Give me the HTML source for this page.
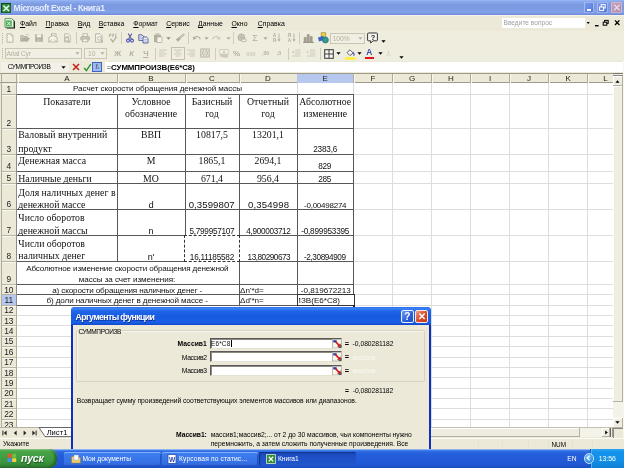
<!DOCTYPE html>
<html lang="ru"><head><meta charset="utf-8"><title>Microsoft Excel - Книга1</title>
<style>
html,body{margin:0;padding:0;}
body{width:624px;height:468px;position:relative;overflow:hidden;background:#ece9d8;font-family:"Liberation Sans","DejaVu Sans",sans-serif;will-change:transform;}
body div,body svg{position:absolute;}
.t{white-space:nowrap;}
.f{font-family:"Liberation Serif","DejaVu Serif",serif;}
.t span,.t u,.t i{position:static;}
</style></head>
<body>
<div style="left:0px;top:0px;width:624px;height:15.2px;background:linear-gradient(#9bb9f6 0%,#89a8ee 10%,#7c9be1 28%,#7c9ae1 55%,#84a2ea 80%,#7593df 94%,#6c8ad8 100%);"></div>
<svg style="left:1px;top:2.6px" width="10.4" height="10.4" viewBox="0 0 11 11"><rect x="0.5" y="0.5" width="10" height="10" fill="#2e8b3a" stroke="#0d4a18"/><path d="M2.5 2.8 L8.5 8.4 M8.5 2.8 L2.5 8.4" stroke="#e8f4e8" stroke-width="1.6"/></svg>
<div class="t" style="top:3px;font-size:8.7px;line-height:10px;color:#e6edfc;font-weight:bold;letter-spacing:-0.418px;left:13.6px;">Microsoft Excel - Книга1</div>
<div style="left:584px;top:1.5px;width:10px;height:11px;background:linear-gradient(135deg,#7f9cf0,#4f74d8);border-radius:2px;box-shadow:0 0 0 .6px #c8d6f6 inset;"></div>
<div style="left:586.5px;top:9px;width:4px;height:1.6px;background:#fff;"></div>
<div style="left:597px;top:1.5px;width:10.5px;height:11px;background:linear-gradient(135deg,#7f9cf0,#4f74d8);border-radius:2px;box-shadow:0 0 0 .6px #c8d6f6 inset;"></div>
<svg style="left:597px;top:1.5px" width="11" height="11" viewBox="0 0 11 11"><rect x="4.2" y="2.6" width="4" height="3.4" fill="none" stroke="#fff" stroke-width="1"/><rect x="2.6" y="5" width="4" height="3.4" fill="#5f82e0" stroke="#fff" stroke-width="1"/></svg>
<div style="left:610.5px;top:1.5px;width:11.5px;height:11px;background:linear-gradient(135deg,#c9a3b8,#b48aa8);border-radius:2px;box-shadow:0 0 0 .6px #d8d0ea inset;"></div>
<svg style="left:610.5px;top:1.5px" width="12" height="11" viewBox="0 0 12 11"><path d="M3.2 2.8 L8.6 8.2 M8.6 2.8 L3.2 8.2" stroke="#e6dcee" stroke-width="1.3"/></svg>
<div style="left:0px;top:15.2px;width:624px;height:15.4px;background:#ece9d8;border-top:1px solid #f6f4ea;"></div>
<svg style="left:4px;top:17.6px" width="12" height="11" viewBox="0 0 12 11"><path d="M2.6 1.6 H9 L11 3.6 V10.4 H2.6 Z" fill="#111"/><path d="M1 .6 H7.6 L9.8 2.8 V9.4 H1 Z" fill="#f4fbf4" stroke="#3c7c44" stroke-width=".8"/><rect x="1.8" y="2.4" width="6" height="6" fill="#4cae58"/><path d="M3.2 3.8 L6.4 7.2 M6.4 3.8 L3.2 7.2" stroke="#e8ffe8" stroke-width="1"/></svg>
<div class="t" style="top:20px;font-size:6.9px;line-height:7px;color:#000;left:-1.6px;width:60px;text-align:center;"><u>Ф</u>айл</div>
<div class="t" style="top:20px;font-size:6.9px;line-height:7px;color:#000;left:27.25px;width:60px;text-align:center;"><u>П</u>равка</div>
<div class="t" style="top:20px;font-size:6.9px;line-height:7px;color:#000;left:54.0px;width:60px;text-align:center;"><u>В</u>ид</div>
<div class="t" style="top:20px;font-size:6.9px;line-height:7px;color:#000;left:81.5px;width:60px;text-align:center;"><u>В</u>ставка</div>
<div class="t" style="top:20px;font-size:6.9px;line-height:7px;color:#000;left:115.5px;width:60px;text-align:center;"><u>Ф</u>ормат</div>
<div class="t" style="top:20px;font-size:6.9px;line-height:7px;color:#000;left:148.0px;width:60px;text-align:center;"><u>С</u>ервис</div>
<div class="t" style="top:20px;font-size:6.9px;line-height:7px;color:#000;left:180.5px;width:60px;text-align:center;"><u>Д</u>анные</div>
<div class="t" style="top:20px;font-size:6.9px;line-height:7px;color:#000;left:209.5px;width:60px;text-align:center;"><u>О</u>кно</div>
<div class="t" style="top:20px;font-size:6.9px;line-height:7px;color:#000;left:241.25px;width:60px;text-align:center;"><u>С</u>правка</div>
<div style="left:502px;top:17.5px;width:82.5px;height:10.5px;background:#fff;"></div>
<div class="t" style="top:19px;font-size:6.6px;line-height:7px;color:#a0a0a0;left:503.5px;">Введите вопрос</div>
<svg style="left:585px;top:17px" width="38" height="12" viewBox="0 0 38 12"><path d="M1.6 5 h3.2 l-1.6 2 z" fill="#000"/><rect x="10" y="8" width="3.6" height="1.4" fill="#000"/><rect x="19.6" y="3.4" width="3.6" height="3" fill="none" stroke="#000" stroke-width="1"/><rect x="18.2" y="5.2" width="3.6" height="3" fill="#ece9d8" stroke="#000" stroke-width="1"/><path d="M30 3.4 l4.4 4.6 M34.4 3.4 l-4.4 4.6" stroke="#000" stroke-width="1.3"/></svg>
<div style="left:0px;top:30.5px;width:624px;height:30px;background:#efedde;"></div>
<div style="left:2px;top:32.5px;width:1.2px;height:11px;background:repeating-linear-gradient(#bebbaa 0,#bebbaa 1px,#e6e3d2 1px,#e6e3d2 2px);"></div>
<svg style="left:5.3px;top:32.6px" width="10" height="10" viewBox="0 0 10 10"><path d="M2 .8 H6 L8 2.8 V9.2 H2 Z" fill="#f5f3ea" stroke="#b2af9f" stroke-width=".9"/><path d="M6 .8 V2.8 H8" fill="none" stroke="#b2af9f" stroke-width=".7"/></svg>
<svg style="left:20px;top:32.6px" width="10" height="10" viewBox="0 0 10 10"><path d="M.8 8.2 V2.6 H3.2 L4 3.6 H7.2 V5" fill="#cdcaba" stroke="#b2af9f" stroke-width=".9"/><path d="M.8 8.2 L2.8 5 H9.6 L7.6 8.2 Z" fill="#b2af9f" stroke="#b2af9f" stroke-width=".7"/><path d="M6.2 1.6 q1.8 -.8 2.6 1" fill="none" stroke="#b2af9f" stroke-width=".7"/></svg>
<svg style="left:34.2px;top:32.6px" width="10" height="10" viewBox="0 0 10 10"><rect x="1.2" y="1.2" width="7.6" height="7.6" fill="#b2af9f"/><rect x="2.8" y="1.4" width="4.4" height="3" fill="#f5f3ea"/><rect x="3.2" y="6.2" width="3.6" height="2.6" fill="#cdcaba"/><rect x="5.4" y="6.6" width="1" height="1.8" fill="#b2af9f"/></svg>
<svg style="left:47.8px;top:32.6px" width="10" height="10" viewBox="0 0 10 10"><rect x="3.4" y=".8" width="4.6" height="5" fill="#f5f3ea" stroke="#b2af9f" stroke-width=".8"/><path d="M.8 4.4 L5 2.4 L9.2 4.4 V9 H.8 Z" fill="#f5f3ea" stroke="#b2af9f" stroke-width=".8"/><path d="M.8 9 L4 6.4 M9.2 9 L6 6.4" stroke="#b2af9f" stroke-width=".7"/></svg>
<svg style="left:61.8px;top:32.6px" width="10" height="10" viewBox="0 0 10 10"><path d="M2.6 .8 H6.4 L8.2 2.6 V9 H2.6 Z" fill="#f5f3ea" stroke="#b2af9f" stroke-width=".8"/><rect x="3.4" y="3" width="3.6" height="2.6" fill="#cdcaba"/><circle cx="4.6" cy="6.4" r="1.7" fill="#f5f3ea" stroke="#b2af9f" stroke-width=".9"/><path d="M5.8 7.6 L8 9.4" stroke="#b2af9f" stroke-width="1.2"/></svg>
<div style="left:76px;top:32px;width:1px;height:12px;background:#cfccbb;"></div>
<svg style="left:80px;top:32.6px" width="10" height="10" viewBox="0 0 10 10"><rect x="3" y=".8" width="4.4" height="3" fill="#f5f3ea" stroke="#b2af9f" stroke-width=".8"/><rect x=".8" y="3.6" width="8.6" height="3.6" rx="1" fill="#cdcaba" stroke="#b2af9f" stroke-width=".9"/><rect x="2.4" y="6" width="5.4" height="2.8" fill="#f5f3ea" stroke="#b2af9f" stroke-width=".8"/></svg>
<svg style="left:93.8px;top:32.6px" width="10" height="10" viewBox="0 0 10 10"><path d="M1.6 .8 H6 L8 2.8 V9.2 H1.6 Z" fill="#f5f3ea" stroke="#b2af9f" stroke-width=".9"/><circle cx="5.4" cy="5.4" r="1.8" fill="#fbfaf4" stroke="#b2af9f" stroke-width=".9"/><path d="M6.8 6.8 L9 9.2" stroke="#b2af9f" stroke-width="1.2"/></svg>
<svg style="left:107.5px;top:32.6px" width="10" height="10" viewBox="0 0 10 10"><path d="M1.4 1 V4 M1.4 1 H3 V2.4 H1.4 M4.6 1 V4 M4.6 1 H6 M4.6 2.4 H6 M8.6 1 H7.4 V3.8 H8.6" fill="none" stroke="#b2af9f" stroke-width=".8"/><path d="M2.4 5.6 L4.8 8.8 L8.6 3.6" fill="none" stroke="#b2af9f" stroke-width="1.3"/></svg>
<div style="left:121.2px;top:32px;width:1px;height:12px;background:#cfccbb;"></div>
<svg style="left:125.2px;top:33.2px" width="10" height="10" viewBox="0 0 10 10"><path d="M3.2 .6 L6.4 6 M6.8 .6 L3.6 6" stroke="#5a5f9a" stroke-width="1.1"/><circle cx="3" cy="7.6" r="1.5" fill="none" stroke="#4d55b8" stroke-width="1.1"/><circle cx="7" cy="7.6" r="1.5" fill="none" stroke="#4d55b8" stroke-width="1.1"/></svg>
<svg style="left:138.4px;top:33.6px" width="11" height="10" viewBox="0 0 11 10"><path d="M.8 .8 H4 L5.6 2.4 V6.4 H.8 Z" fill="#eceef8" stroke="#4a5296" stroke-width=".9"/><path d="M5 3 H8.4 L10 4.6 V9 H5 Z" fill="#f2f3fb" stroke="#4a5296" stroke-width=".9"/><path d="M1.8 3 H4 M1.8 4.6 H4 M6.2 5.6 H8.8 M6.2 7.2 H8.8" stroke="#8088c0" stroke-width=".6"/></svg>
<svg style="left:153.3px;top:32.6px" width="10" height="10" viewBox="0 0 10 10"><rect x="1" y="1.8" width="7" height="7.4" fill="#b2af9f"/><rect x="3" y=".8" width="3" height="2" fill="#cdcaba" stroke="#b2af9f" stroke-width=".6"/><rect x="4" y="4" width="5" height="5.4" fill="#f5f3ea" stroke="#b2af9f" stroke-width=".7"/></svg>
<svg style="left:165.8px;top:36.9px" width="5" height="3" viewBox="0 0 5 3"><path d="M.4 .3 H4.6 L2.5 2.8 Z" fill="#8f8c7c"/></svg>
<svg style="left:175px;top:32.6px" width="10" height="10" viewBox="0 0 10 10"><path d="M8.8 .8 L9.6 1.8 L5.4 5.4 L4.2 4.2 Z" fill="#cdcaba" stroke="#b2af9f" stroke-width=".7"/><path d="M4 4 L5.8 5.8 L3.2 8.8 L.8 6.6 Z" fill="#b2af9f"/></svg>
<div style="left:188.2px;top:32px;width:1px;height:12px;background:#cfccbb;"></div>
<svg style="left:192.4px;top:33.8px" width="10" height="8" viewBox="0 0 10 8"><path d="M2 4.6 C3 1.6,7 1.6,8.4 5.2" fill="none" stroke="#b2af9f" stroke-width="1.1"/><path d="M.6 2.4 L1.4 6 L4.4 4.4 Z" fill="#b2af9f"/></svg>
<svg style="left:204.2px;top:36.9px" width="5" height="3" viewBox="0 0 5 3"><path d="M.4 .3 H4.6 L2.5 2.8 Z" fill="#aaa796"/></svg>
<svg style="left:211px;top:33.8px" width="10" height="8" viewBox="0 0 10 8"><path d="M8 4.6 C7 1.6,3 1.6,1.6 5.2" fill="none" stroke="#cdcaba" stroke-width="1.1"/><path d="M9.4 2.4 L8.6 6 L5.6 4.4 Z" fill="#cdcaba"/></svg>
<svg style="left:225.5px;top:36.9px" width="5" height="3" viewBox="0 0 5 3"><path d="M.4 .3 H4.6 L2.5 2.8 Z" fill="#b4b1a0"/></svg>
<div style="left:233.2px;top:32px;width:1px;height:12px;background:#cfccbb;"></div>
<svg style="left:236.5px;top:32.6px" width="10" height="10" viewBox="0 0 10 10"><circle cx="4.4" cy="4.4" r="3.4" fill="#cdcaba" stroke="#b2af9f" stroke-width=".9"/><path d="M1 4.4 H7.8 M4.4 1 V7.8" stroke="#b2af9f" stroke-width=".6"/><rect x="4.6" y="6" width="4.6" height="2.6" rx="1.2" fill="#f5f3ea" stroke="#b2af9f" stroke-width=".9"/></svg>
<div class="t" style="top:33px;font-size:9px;line-height:10px;color:#b2af9f;left:245.0px;width:20px;text-align:center;">Σ</div>
<svg style="left:263.3px;top:36.9px" width="5" height="3" viewBox="0 0 5 3"><path d="M.4 .3 H4.6 L2.5 2.8 Z" fill="#aaa796"/></svg>
<div class="t" style="top:33px;font-size:4.8px;line-height:5px;color:#b2af9f;font-weight:bold;left:269.4px;width:10px;text-align:center;">А</div>
<div class="t" style="top:38px;font-size:4.8px;line-height:5px;color:#b2af9f;font-weight:bold;left:269.4px;width:10px;text-align:center;">Я</div>
<svg style="left:276.6px;top:33.4px" width="4" height="9" viewBox="0 0 4 9"><path d="M2 .4 V7.4" stroke="#b2af9f" stroke-width=".9"/><path d="M.4 6.2 H3.6 L2 8.8 Z" fill="#b2af9f"/></svg>
<div class="t" style="top:33px;font-size:4.8px;line-height:5px;color:#b2af9f;font-weight:bold;left:284.6px;width:10px;text-align:center;">Я</div>
<div class="t" style="top:38px;font-size:4.8px;line-height:5px;color:#b2af9f;font-weight:bold;left:284.6px;width:10px;text-align:center;">А</div>
<svg style="left:291.8px;top:33.4px" width="4" height="9" viewBox="0 0 4 9"><path d="M2 .4 V7.4" stroke="#b2af9f" stroke-width=".9"/><path d="M.4 6.2 H3.6 L2 8.8 Z" fill="#b2af9f"/></svg>
<div style="left:299px;top:32px;width:1px;height:12px;background:#cfccbb;"></div>
<svg style="left:303.4px;top:32.8px" width="11" height="10" viewBox="0 0 11 10"><path d="M1.2 9 V4.4 H3.2 V9 M4.2 9 V1.6 H6.2 V9 M7.2 9 V3.6 H9.2 V9" fill="#a3a092" stroke="#8f8d7f" stroke-width=".6"/><path d="M.2 9.4 H10.8" stroke="#8f8d7f" stroke-width="1"/></svg>
<svg style="left:316.6px;top:32px" width="13" height="12" viewBox="0 0 13 12"><rect x="4.2" y=".8" width="4.6" height="4.4" fill="#f2d24a" stroke="#8a7a20" stroke-width=".6"/><path d="M1 5.6 L6.4 3.8 L7 8 L2 9.4 Z" fill="#3a66c8"/><circle cx="8.4" cy="8" r="3" fill="#2f9e8a" stroke="#1c5c78" stroke-width=".6"/></svg>
<div style="left:329.5px;top:32.5px;width:35px;height:11px;background:#f1efe3;border:1px solid #c9c6b4;box-sizing:border-box;"></div>
<div class="t" style="top:35px;font-size:6.8px;line-height:7px;color:#b4b1a0;letter-spacing:-0.173px;left:332.7px;">100%</div>
<svg style="left:358.3px;top:37.3px" width="5" height="3" viewBox="0 0 5 3"><path d="M.4 .3 H4.6 L2.5 2.8 Z" fill="#b4b1a0"/></svg>
<svg style="left:367.4px;top:32.4px" width="12" height="12" viewBox="0 0 12 12"><path d="M1.4 1 H9.6 a.8 .8 0 0 1 .8 .8 V8 a.8 .8 0 0 1 -.8 .8 H6 L3.6 11 V8.8 H1.4 a.8 .8 0 0 1 -.8 -.8 V1.8 a.8 .8 0 0 1 .8 -.8 Z" fill="#f8f7f0" stroke="#333" stroke-width="1"/></svg>
<div class="t" style="top:33px;font-size:7.4px;line-height:9px;color:#222;font-weight:bold;left:368.0px;width:10px;text-align:center;">?</div>
<svg style="left:380.5px;top:40.3px" width="5" height="3" viewBox="0 0 5 3"><path d="M.4 .3 H4.6 L2.5 2.8 Z" fill="#000"/></svg>
<div style="left:2px;top:47.5px;width:1.2px;height:11px;background:repeating-linear-gradient(#bebbaa 0,#bebbaa 1px,#e6e3d2 1px,#e6e3d2 2px);"></div>
<div style="left:5px;top:48px;width:76.5px;height:10.5px;background:#f1efe3;border:1px solid #c9c6b4;box-sizing:border-box;"></div>
<div class="t" style="top:50px;font-size:6.8px;line-height:7px;color:#b4b1a2;letter-spacing:-0.207px;left:6.6px;">Arial Cyr</div>
<svg style="left:75.0px;top:52.3px" width="5" height="3" viewBox="0 0 5 3"><path d="M.4 .3 H4.6 L2.5 2.8 Z" fill="#b4b1a0"/></svg>
<div style="left:84.3px;top:48px;width:22.5px;height:10.5px;background:#f1efe3;border:1px solid #c9c6b4;box-sizing:border-box;"></div>
<div class="t" style="top:50px;font-size:6.8px;line-height:7px;color:#b4b1a2;left:88px;">10</div>
<svg style="left:99.8px;top:52.3px" width="5" height="3" viewBox="0 0 5 3"><path d="M.4 .3 H4.6 L2.5 2.8 Z" fill="#b4b1a0"/></svg>
<div class="t" style="top:49px;font-size:7.6px;line-height:9px;color:#b2af9f;font-weight:bold;left:111.7px;width:12px;text-align:center;">Ж</div>
<div class="t" style="top:49px;font-size:7.6px;line-height:9px;color:#b2af9f;font-weight:bold;font-style:italic;left:125.6px;width:12px;text-align:center;">К</div>
<div class="t" style="top:49px;font-size:7.6px;line-height:9px;color:#b2af9f;font-weight:bold;left:139.8px;width:12px;text-align:center;"><u>Ч</u></div>
<div style="left:154.6px;top:47.5px;width:1px;height:12px;background:#cfccbb;"></div>
<svg style="left:157.5px;top:48.2px" width="10" height="10" viewBox="0 0 10 10"><path d="M1 2H9M1 4H6.5M1 6H9M1 8H6.5" stroke="#cdcaba" stroke-width="1"/></svg>
<div style="left:171px;top:47.2px;width:13.6px;height:12.4px;border:1px solid #c2bfac;box-sizing:border-box;background:#f1efe3;"></div>
<svg style="left:172.8px;top:48.2px" width="10" height="10" viewBox="0 0 10 10"><path d="M1 2H9M2.4 4H7.6M1 6H9M2.4 8H7.6" stroke="#cdcaba" stroke-width="1"/></svg>
<svg style="left:186px;top:48.2px" width="10" height="10" viewBox="0 0 10 10"><path d="M1 2H9M3.5 4H9M1 6H9M3.5 8H9" stroke="#cdcaba" stroke-width="1"/></svg>
<svg style="left:200px;top:48.4px" width="10" height="10" viewBox="0 0 10 10"><rect x=".8" y="1" width="8.4" height="8" fill="#f5f3ea" stroke="#b2af9f" stroke-width=".9"/><path d="M.8 3.2 H9.2 M.8 6.8 H9.2 M3.6 1 V3.2 M6.4 1 V3.2 M3.6 6.8 V9 M6.4 6.8 V9" stroke="#b2af9f" stroke-width=".7"/><path d="M2 5 H8 M2 5 l1.2 -1 M2 5 l1.2 1 M8 5 l-1.2 -1 M8 5 l-1.2 1" stroke="#b2af9f" stroke-width=".7" fill="none"/></svg>
<div style="left:214.6px;top:47.5px;width:1px;height:12px;background:#cfccbb;"></div>
<svg style="left:218.5px;top:48.2px" width="10" height="10" viewBox="0 0 10 10"><rect x=".8" y="1.6" width="8.4" height="4.4" fill="#f5f3ea" stroke="#cdcaba" stroke-width=".9"/><circle cx="5" cy="3.8" r="1.2" fill="#cdcaba"/><ellipse cx="3.6" cy="7.6" rx="2.4" ry="1.4" fill="#cdcaba" stroke="#cdcaba" stroke-width=".8"/><ellipse cx="6.6" cy="8" rx="2.4" ry="1.4" fill="#cdcaba" stroke="#cdcaba" stroke-width=".8"/></svg>
<div class="t" style="top:49px;font-size:8px;line-height:9px;color:#b2af9f;font-weight:bold;left:229.6px;width:14px;text-align:center;">%</div>
<div class="t" style="top:51px;font-size:5.6px;line-height:6px;color:#cdcaba;font-weight:bold;left:243.0px;width:16px;text-align:center;">000</div>
<div class="t" style="top:50px;font-size:5px;line-height:6px;color:#b2af9f;font-weight:bold;left:257.5px;width:16px;text-align:center;">,00</div>
<div class="t" style="top:50px;font-size:5px;line-height:6px;color:#b2af9f;font-weight:bold;left:271.0px;width:16px;text-align:center;">,0</div>
<div style="left:288px;top:47.5px;width:1px;height:12px;background:#cfccbb;"></div>
<svg style="left:291px;top:48.2px" width="10" height="10" viewBox="0 0 10 10"><path d="M4 2H9.4M4 4H9.4M4 6H9.4M1 8H9.4" stroke="#cdcaba" stroke-width=".9"/><path d="M3 2.4 V5.6 L.8 4 Z" fill="#cdcaba"/></svg>
<svg style="left:306px;top:48.2px" width="10" height="10" viewBox="0 0 10 10"><path d="M4 2H9.4M4 4H9.4M4 6H9.4M1 8H9.4" stroke="#cdcaba" stroke-width=".9"/><path d="M.8 2.4 V5.6 L3 4 Z" fill="#cdcaba"/></svg>
<div style="left:319.5px;top:47.5px;width:1px;height:12px;background:#cfccbb;"></div>
<svg style="left:324px;top:49.2px" width="10" height="10" viewBox="0 0 10 10"><rect x=".7" y=".7" width="8.6" height="8.6" fill="#f8f7f0" stroke="#444" stroke-width="1.1"/><path d="M5 .7 V9.3 M.7 5 H9.3" stroke="#444" stroke-width="1"/></svg>
<svg style="left:336.3px;top:52.3px" width="5" height="3" viewBox="0 0 5 3"><path d="M.4 .3 H4.6 L2.5 2.8 Z" fill="#000"/></svg>
<svg style="left:343.6px;top:47.6px" width="12" height="12" viewBox="0 0 12 12"><path d="M3 4.6 L6 1.8 L9.2 5 L6 7.6 Z" fill="#f4f4fa" stroke="#555" stroke-width=".9"/><path d="M9 4.4 C10.4 5.6,10.2 7,9.6 7.6" stroke="#3a58c0" stroke-width="1.2" fill="none"/><rect x="1" y="9.2" width="10.4" height="2.6" fill="#ffee3a"/></svg>
<svg style="left:357.1px;top:52.3px" width="5" height="3" viewBox="0 0 5 3"><path d="M.4 .3 H4.6 L2.5 2.8 Z" fill="#000"/></svg>
<div class="t" style="top:47px;font-size:8.4px;line-height:10px;color:#3a4ab0;font-weight:bold;left:363.4px;width:12px;text-align:center;">A</div>
<div style="left:364.8px;top:57px;width:9.6px;height:2.4px;background:#e0141e;"></div>
<svg style="left:377.7px;top:52.3px" width="5" height="3" viewBox="0 0 5 3"><path d="M.4 .3 H4.6 L2.5 2.8 Z" fill="#000"/></svg>
<div class="t" style="top:50px;font-size:7px;line-height:7px;color:#cdcaba;left:383.0px;width:12px;text-align:center;"><i>f</i><span style="font-size:4px">x</span></div>
<svg style="left:398.8px;top:55.7px" width="5" height="3" viewBox="0 0 5 3"><path d="M.4 .3 H4.6 L2.5 2.8 Z" fill="#000"/></svg>
<div style="left:0px;top:60.5px;width:624px;height:12.5px;background:#ece9d8;"></div>
<div style="left:1px;top:61.5px;width:68px;height:10.5px;background:#f3f1e7;"></div>
<div style="left:105px;top:61.5px;width:519px;height:10.5px;background:#fff;"></div>
<div class="t" style="top:63px;font-size:6.5px;line-height:7px;color:#000;letter-spacing:-0.359px;left:7.7px;">СУММПРОИЗВ</div>
<svg style="left:60.5px;top:66.0px" width="5" height="3" viewBox="0 0 5 3"><path d="M.4 .3 H4.6 L2.5 2.8 Z" fill="#000"/></svg>
<svg style="left:72px;top:63px" width="8" height="8" viewBox="0 0 8 8"><path d="M1 1 L7 7 M7 1 L1 7" stroke="#c4201c" stroke-width="1.5"/></svg>
<svg style="left:82.5px;top:62.5px" width="9" height="9" viewBox="0 0 9 9"><path d="M1.2 5 L3.4 7.6 L7.8 1.2" stroke="#2d9a32" stroke-width="1.5" fill="none"/></svg>
<div style="left:92.4px;top:62px;width:9.7px;height:10px;background:#9fbaf0;border:1px solid #3f62c6;box-sizing:border-box;"></div>
<div class="t" style="top:63px;font-size:6.5px;line-height:7px;color:#445;left:92.3px;width:10px;text-align:center;"><i>f</i><span style="font-size:3.6px">x</span></div>
<div class="t" style="top:63px;font-size:7.9px;line-height:9px;color:#000;font-weight:bold;letter-spacing:-0.078px;left:106.5px;"><span style="color:#9a9a9a">=</span>СУММПРОИЗВ(E6*C8)</div>
<div style="left:0px;top:73px;width:624px;height:355px;background:#ece9d8;"></div>
<div style="left:17px;top:83px;width:596px;height:344.3px;background:#fff;"></div>
<div style="left:116.5px;top:83px;width:1px;height:344.3px;background:#dddddd;"></div>
<div style="left:184.5px;top:83px;width:1px;height:344.3px;background:#dddddd;"></div>
<div style="left:238.5px;top:83px;width:1px;height:344.3px;background:#dddddd;"></div>
<div style="left:296.5px;top:83px;width:1px;height:344.3px;background:#dddddd;"></div>
<div style="left:353.0px;top:83px;width:1px;height:344.3px;background:#dddddd;"></div>
<div style="left:392.0px;top:83px;width:1px;height:344.3px;background:#dddddd;"></div>
<div style="left:431.0px;top:83px;width:1px;height:344.3px;background:#dddddd;"></div>
<div style="left:470.0px;top:83px;width:1px;height:344.3px;background:#dddddd;"></div>
<div style="left:509.1px;top:83px;width:1px;height:344.3px;background:#dddddd;"></div>
<div style="left:548.1px;top:83px;width:1px;height:344.3px;background:#dddddd;"></div>
<div style="left:587.1px;top:83px;width:1px;height:344.3px;background:#dddddd;"></div>
<div style="left:17px;top:93.5px;width:596px;height:1px;background:#dddddd;"></div>
<div style="left:17px;top:127.5px;width:596px;height:1px;background:#dddddd;"></div>
<div style="left:17px;top:154.0px;width:596px;height:1px;background:#dddddd;"></div>
<div style="left:17px;top:170.5px;width:596px;height:1px;background:#dddddd;"></div>
<div style="left:17px;top:183.0px;width:596px;height:1px;background:#dddddd;"></div>
<div style="left:17px;top:209.0px;width:596px;height:1px;background:#dddddd;"></div>
<div style="left:17px;top:234.7px;width:596px;height:1px;background:#dddddd;"></div>
<div style="left:17px;top:260.8px;width:596px;height:1px;background:#dddddd;"></div>
<div style="left:17px;top:283.9px;width:596px;height:1px;background:#dddddd;"></div>
<div style="left:17px;top:294.3px;width:596px;height:1px;background:#dddddd;"></div>
<div style="left:17px;top:304.7px;width:596px;height:1px;background:#dddddd;"></div>
<div style="left:17px;top:315.06px;width:596px;height:1px;background:#dddddd;"></div>
<div style="left:17px;top:325.42px;width:596px;height:1px;background:#dddddd;"></div>
<div style="left:17px;top:335.78000000000003px;width:596px;height:1px;background:#dddddd;"></div>
<div style="left:17px;top:346.14000000000004px;width:596px;height:1px;background:#dddddd;"></div>
<div style="left:17px;top:356.50000000000006px;width:596px;height:1px;background:#dddddd;"></div>
<div style="left:17px;top:366.86000000000007px;width:596px;height:1px;background:#dddddd;"></div>
<div style="left:17px;top:377.2200000000001px;width:596px;height:1px;background:#dddddd;"></div>
<div style="left:17px;top:387.5800000000001px;width:596px;height:1px;background:#dddddd;"></div>
<div style="left:17px;top:397.9400000000001px;width:596px;height:1px;background:#dddddd;"></div>
<div style="left:17px;top:408.3000000000001px;width:596px;height:1px;background:#dddddd;"></div>
<div style="left:17px;top:418.66000000000014px;width:596px;height:1px;background:#dddddd;"></div>
<div style="left:17.5px;top:83.5px;width:279px;height:10px;background:#fff;"></div>
<div style="left:17.5px;top:262px;width:221px;height:22px;background:#fff;"></div>
<div style="left:17.5px;top:285px;width:221px;height:9.4px;background:#fff;"></div>
<div style="left:17.5px;top:295.4px;width:221px;height:9.4px;background:#fff;"></div>
<div style="left:0px;top:73px;width:613px;height:10px;background:#ece9d8;border-top:1px solid #9d9a8a;border-bottom:1px solid #9d9a8a;box-sizing:border-box;"></div>
<div style="left:116.5px;top:74px;width:1px;height:8.5px;background:#aeab9a;"></div>
<div style="left:17.5px;top:74px;width:1px;height:8.5px;background:#f7f6ef;"></div>
<div class="t" style="top:74px;font-size:8px;line-height:9px;color:#222;left:57.0px;width:20px;text-align:center;">A</div>
<div style="left:184.5px;top:74px;width:1px;height:8.5px;background:#aeab9a;"></div>
<div style="left:117.5px;top:74px;width:1px;height:8.5px;background:#f7f6ef;"></div>
<div class="t" style="top:74px;font-size:8px;line-height:9px;color:#222;left:141.0px;width:20px;text-align:center;">B</div>
<div style="left:238.5px;top:74px;width:1px;height:8.5px;background:#aeab9a;"></div>
<div style="left:185.5px;top:74px;width:1px;height:8.5px;background:#f7f6ef;"></div>
<div class="t" style="top:74px;font-size:8px;line-height:9px;color:#222;left:202.0px;width:20px;text-align:center;">C</div>
<div style="left:296.5px;top:74px;width:1px;height:8.5px;background:#aeab9a;"></div>
<div style="left:239.5px;top:74px;width:1px;height:8.5px;background:#f7f6ef;"></div>
<div class="t" style="top:74px;font-size:8px;line-height:9px;color:#222;left:258.0px;width:20px;text-align:center;">D</div>
<div style="left:297px;top:73.5px;width:56.5px;height:9px;background:#b7c8ee;"></div>
<div style="left:353.0px;top:74px;width:1px;height:8.5px;background:#aeab9a;"></div>
<div class="t" style="top:74px;font-size:8px;line-height:9px;color:#222;left:315.25px;width:20px;text-align:center;">E</div>
<div style="left:392.0px;top:74px;width:1px;height:8.5px;background:#aeab9a;"></div>
<div style="left:354.0px;top:74px;width:1px;height:8.5px;background:#f7f6ef;"></div>
<div class="t" style="top:74px;font-size:8px;line-height:9px;color:#222;left:363.0px;width:20px;text-align:center;">F</div>
<div style="left:431.0px;top:74px;width:1px;height:8.5px;background:#aeab9a;"></div>
<div style="left:393.0px;top:74px;width:1px;height:8.5px;background:#f7f6ef;"></div>
<div class="t" style="top:74px;font-size:8px;line-height:9px;color:#222;left:402.0px;width:20px;text-align:center;">G</div>
<div style="left:470.0px;top:74px;width:1px;height:8.5px;background:#aeab9a;"></div>
<div style="left:432.0px;top:74px;width:1px;height:8.5px;background:#f7f6ef;"></div>
<div class="t" style="top:74px;font-size:8px;line-height:9px;color:#222;left:441.0px;width:20px;text-align:center;">H</div>
<div style="left:509.1px;top:74px;width:1px;height:8.5px;background:#aeab9a;"></div>
<div style="left:471.0px;top:74px;width:1px;height:8.5px;background:#f7f6ef;"></div>
<div class="t" style="top:74px;font-size:8px;line-height:9px;color:#222;left:480.05px;width:20px;text-align:center;">I</div>
<div style="left:548.1px;top:74px;width:1px;height:8.5px;background:#aeab9a;"></div>
<div style="left:510.1px;top:74px;width:1px;height:8.5px;background:#f7f6ef;"></div>
<div class="t" style="top:74px;font-size:8px;line-height:9px;color:#222;left:519.1px;width:20px;text-align:center;">J</div>
<div style="left:587.1px;top:74px;width:1px;height:8.5px;background:#aeab9a;"></div>
<div style="left:549.1px;top:74px;width:1px;height:8.5px;background:#f7f6ef;"></div>
<div class="t" style="top:74px;font-size:8px;line-height:9px;color:#222;left:558.1px;width:20px;text-align:center;">K</div>
<div style="left:612.5px;top:74px;width:1px;height:8.5px;background:#aeab9a;"></div>
<div style="left:588.1px;top:74px;width:1px;height:8.5px;background:#f7f6ef;"></div>
<div class="t" style="top:74px;font-size:8px;line-height:9px;color:#222;left:595.5px;width:20px;text-align:center;">L</div>
<div style="left:16px;top:74px;width:1px;height:8.5px;background:#aeab9a;"></div>
<div style="left:1px;top:73px;width:1px;height:355px;background:#aeab9a;"></div>
<div style="left:16.2px;top:83px;width:1px;height:344.3px;background:#aeab9a;"></div>
<div style="left:1.5px;top:93.5px;width:15px;height:1px;background:#b8b5a4;"></div>
<div style="left:2px;top:83.5px;width:14px;height:1px;background:#f7f6ef;"></div>
<div class="t" style="top:84px;font-size:8.4px;line-height:10px;color:#222;left:0.8px;width:16px;text-align:center;">1</div>
<div style="left:1.5px;top:127.5px;width:15px;height:1px;background:#b8b5a4;"></div>
<div style="left:2px;top:94.5px;width:14px;height:1px;background:#f7f6ef;"></div>
<div class="t" style="top:118px;font-size:8.4px;line-height:10px;color:#222;left:0.8px;width:16px;text-align:center;">2</div>
<div style="left:1.5px;top:154.0px;width:15px;height:1px;background:#b8b5a4;"></div>
<div style="left:2px;top:128.5px;width:14px;height:1px;background:#f7f6ef;"></div>
<div class="t" style="top:144px;font-size:8.4px;line-height:10px;color:#222;left:0.8px;width:16px;text-align:center;">3</div>
<div style="left:1.5px;top:170.5px;width:15px;height:1px;background:#b8b5a4;"></div>
<div style="left:2px;top:155.0px;width:14px;height:1px;background:#f7f6ef;"></div>
<div class="t" style="top:161px;font-size:8.4px;line-height:10px;color:#222;left:0.8px;width:16px;text-align:center;">4</div>
<div style="left:1.5px;top:183.0px;width:15px;height:1px;background:#b8b5a4;"></div>
<div style="left:2px;top:171.5px;width:14px;height:1px;background:#f7f6ef;"></div>
<div class="t" style="top:173px;font-size:8.4px;line-height:10px;color:#222;left:0.8px;width:16px;text-align:center;">5</div>
<div style="left:1.5px;top:209.0px;width:15px;height:1px;background:#b8b5a4;"></div>
<div style="left:2px;top:184.0px;width:14px;height:1px;background:#f7f6ef;"></div>
<div class="t" style="top:199px;font-size:8.4px;line-height:10px;color:#222;left:0.8px;width:16px;text-align:center;">6</div>
<div style="left:1.5px;top:234.7px;width:15px;height:1px;background:#b8b5a4;"></div>
<div style="left:2px;top:210.0px;width:14px;height:1px;background:#f7f6ef;"></div>
<div class="t" style="top:225px;font-size:8.4px;line-height:10px;color:#222;left:0.8px;width:16px;text-align:center;">7</div>
<div style="left:1.5px;top:260.8px;width:15px;height:1px;background:#b8b5a4;"></div>
<div style="left:2px;top:235.7px;width:14px;height:1px;background:#f7f6ef;"></div>
<div class="t" style="top:251px;font-size:8.4px;line-height:10px;color:#222;left:0.8px;width:16px;text-align:center;">8</div>
<div style="left:1.5px;top:283.9px;width:15px;height:1px;background:#b8b5a4;"></div>
<div style="left:2px;top:261.8px;width:14px;height:1px;background:#f7f6ef;"></div>
<div class="t" style="top:274px;font-size:8.4px;line-height:10px;color:#222;left:0.8px;width:16px;text-align:center;">9</div>
<div style="left:1.5px;top:294.3px;width:15px;height:1px;background:#b8b5a4;"></div>
<div style="left:2px;top:284.9px;width:14px;height:1px;background:#f7f6ef;"></div>
<div class="t" style="top:285px;font-size:8.4px;line-height:10px;color:#222;left:0.8px;width:16px;text-align:center;">10</div>
<div style="left:1.5px;top:294.8px;width:15px;height:10.399999999999977px;background:#b7c8ee;"></div>
<div style="left:1.5px;top:304.7px;width:15px;height:1px;background:#b8b5a4;"></div>
<div class="t" style="top:295px;font-size:8.4px;line-height:10px;color:#222;left:0.8px;width:16px;text-align:center;">11</div>
<div style="left:1.5px;top:315.06px;width:15px;height:1px;background:#b8b5a4;"></div>
<div style="left:2px;top:305.7px;width:14px;height:1px;background:#f7f6ef;"></div>
<div class="t" style="top:305px;font-size:8.4px;line-height:10px;color:#222;left:0.8px;width:16px;text-align:center;">12</div>
<div style="left:1.5px;top:325.42px;width:15px;height:1px;background:#b8b5a4;"></div>
<div style="left:2px;top:316.06px;width:14px;height:1px;background:#f7f6ef;"></div>
<div class="t" style="top:316px;font-size:8.4px;line-height:10px;color:#222;left:0.8px;width:16px;text-align:center;">13</div>
<div style="left:1.5px;top:335.78000000000003px;width:15px;height:1px;background:#b8b5a4;"></div>
<div style="left:2px;top:326.42px;width:14px;height:1px;background:#f7f6ef;"></div>
<div class="t" style="top:326px;font-size:8.4px;line-height:10px;color:#222;left:0.8px;width:16px;text-align:center;">14</div>
<div style="left:1.5px;top:346.14000000000004px;width:15px;height:1px;background:#b8b5a4;"></div>
<div style="left:2px;top:336.78000000000003px;width:14px;height:1px;background:#f7f6ef;"></div>
<div class="t" style="top:336px;font-size:8.4px;line-height:10px;color:#222;left:0.8px;width:16px;text-align:center;">15</div>
<div style="left:1.5px;top:356.50000000000006px;width:15px;height:1px;background:#b8b5a4;"></div>
<div style="left:2px;top:347.14000000000004px;width:14px;height:1px;background:#f7f6ef;"></div>
<div class="t" style="top:347px;font-size:8.4px;line-height:10px;color:#222;left:0.8px;width:16px;text-align:center;">16</div>
<div style="left:1.5px;top:366.86000000000007px;width:15px;height:1px;background:#b8b5a4;"></div>
<div style="left:2px;top:357.50000000000006px;width:14px;height:1px;background:#f7f6ef;"></div>
<div class="t" style="top:357px;font-size:8.4px;line-height:10px;color:#222;left:0.8px;width:16px;text-align:center;">17</div>
<div style="left:1.5px;top:377.2200000000001px;width:15px;height:1px;background:#b8b5a4;"></div>
<div style="left:2px;top:367.86000000000007px;width:14px;height:1px;background:#f7f6ef;"></div>
<div class="t" style="top:368px;font-size:8.4px;line-height:10px;color:#222;left:0.8px;width:16px;text-align:center;">18</div>
<div style="left:1.5px;top:387.5800000000001px;width:15px;height:1px;background:#b8b5a4;"></div>
<div style="left:2px;top:378.2200000000001px;width:14px;height:1px;background:#f7f6ef;"></div>
<div class="t" style="top:378px;font-size:8.4px;line-height:10px;color:#222;left:0.8px;width:16px;text-align:center;">19</div>
<div style="left:1.5px;top:397.9400000000001px;width:15px;height:1px;background:#b8b5a4;"></div>
<div style="left:2px;top:388.5800000000001px;width:14px;height:1px;background:#f7f6ef;"></div>
<div class="t" style="top:388px;font-size:8.4px;line-height:10px;color:#222;left:0.8px;width:16px;text-align:center;">20</div>
<div style="left:1.5px;top:408.3000000000001px;width:15px;height:1px;background:#b8b5a4;"></div>
<div style="left:2px;top:398.9400000000001px;width:14px;height:1px;background:#f7f6ef;"></div>
<div class="t" style="top:399px;font-size:8.4px;line-height:10px;color:#222;left:0.8px;width:16px;text-align:center;">21</div>
<div style="left:1.5px;top:418.66000000000014px;width:15px;height:1px;background:#b8b5a4;"></div>
<div style="left:2px;top:409.3000000000001px;width:14px;height:1px;background:#f7f6ef;"></div>
<div class="t" style="top:409px;font-size:8.4px;line-height:10px;color:#222;left:0.8px;width:16px;text-align:center;">22</div>
<div style="left:2px;top:419.66000000000014px;width:14px;height:1px;background:#f7f6ef;"></div>
<div class="t" style="top:420px;font-size:8.4px;line-height:10px;color:#222;left:0.8px;width:16px;text-align:center;">23</div>
<div style="left:17px;top:94px;width:337px;height:1px;background:#585858;"></div>
<div style="left:17px;top:128px;width:337px;height:1px;background:#585858;"></div>
<div style="left:17px;top:154px;width:337px;height:1px;background:#585858;"></div>
<div style="left:17px;top:171px;width:337px;height:1px;background:#585858;"></div>
<div style="left:17px;top:183px;width:337px;height:1px;background:#585858;"></div>
<div style="left:17px;top:209px;width:337px;height:1px;background:#585858;"></div>
<div style="left:17px;top:235px;width:337px;height:1px;background:#585858;"></div>
<div style="left:17px;top:261px;width:337px;height:1px;background:#585858;"></div>
<div style="left:17px;top:284px;width:337px;height:1px;background:#585858;"></div>
<div style="left:17px;top:294px;width:337px;height:1px;background:#585858;"></div>
<div style="left:17px;top:305px;width:337px;height:1px;background:#585858;"></div>
<div style="left:117px;top:94px;width:1px;height:167.3px;background:#585858;"></div>
<div style="left:185px;top:94px;width:1px;height:167.3px;background:#585858;"></div>
<div style="left:239px;top:94px;width:1px;height:167.3px;background:#585858;"></div>
<div style="left:297px;top:94px;width:1px;height:167.3px;background:#585858;"></div>
<div style="left:353px;top:94px;width:1px;height:167.3px;background:#585858;"></div>
<div style="left:239px;top:261px;width:1px;height:44.5px;background:#585858;"></div>
<div style="left:297px;top:261px;width:1px;height:44.5px;background:#585858;"></div>
<div style="left:353px;top:261px;width:1px;height:44.5px;background:#585858;"></div>
<div style="left:16px;top:94px;width:1px;height:211.5px;background:#8c8c88;"></div>
<div style="left:184px;top:235px;width:55.5px;height:27px;border:1px dashed #333;box-sizing:border-box;background:#fff;"></div>
<div style="left:297px;top:294px;width:57.5px;height:12px;border:1px solid #333;box-sizing:border-box;background:#fff;"></div>
<div style="left:353px;top:305px;width:2.4px;height:2.4px;background:#222;"></div>
<div class="t" style="top:84px;font-size:8.1px;line-height:9px;color:#111;letter-spacing:-0.072px;left:7.5px;width:300px;text-align:center;">Расчет скорости обращения денежной массы</div>
<div class="t f" style="top:96px;font-size:9.8px;line-height:11px;color:#111;left:2.0px;width:130px;text-align:center;">Показатели</div>
<div class="t f" style="top:96px;font-size:9.8px;line-height:11px;color:#111;left:86.0px;width:130px;text-align:center;">Условное</div>
<div class="t f" style="top:108px;font-size:9.8px;line-height:11px;color:#111;left:86.0px;width:130px;text-align:center;">обозначение</div>
<div class="t f" style="top:96px;font-size:9.8px;line-height:11px;color:#111;left:147.0px;width:130px;text-align:center;">Базисный</div>
<div class="t f" style="top:108px;font-size:9.8px;line-height:11px;color:#111;left:147.0px;width:130px;text-align:center;">год</div>
<div class="t f" style="top:96px;font-size:9.8px;line-height:11px;color:#111;left:203.0px;width:130px;text-align:center;">Отчетный</div>
<div class="t f" style="top:108px;font-size:9.8px;line-height:11px;color:#111;left:203.0px;width:130px;text-align:center;">год</div>
<div class="t f" style="top:96px;font-size:9.8px;line-height:11px;color:#111;left:260.2px;width:130px;text-align:center;">Абсолютное</div>
<div class="t f" style="top:108px;font-size:9.8px;line-height:11px;color:#111;left:260.2px;width:130px;text-align:center;">изменение</div>
<div class="t f" style="top:129px;font-size:9.8px;line-height:11px;color:#111;left:18.3px;">Валовый внутренний</div>
<div class="t f" style="top:143px;font-size:9.8px;line-height:11px;color:#111;left:18.3px;">продукт</div>
<div class="t f" style="top:129px;font-size:9.8px;line-height:11px;color:#111;left:86.0px;width:130px;text-align:center;">ВВП</div>
<div class="t f" style="top:129px;font-size:9.8px;line-height:11px;color:#111;left:147.0px;width:130px;text-align:center;">10817,5</div>
<div class="t f" style="top:129px;font-size:9.8px;line-height:11px;color:#111;left:203.0px;width:130px;text-align:center;">13201,1</div>
<div class="t" style="top:145px;font-size:8.2px;line-height:9px;color:#111;letter-spacing:-0.18px;left:285.2px;width:80px;text-align:center;">2383,6</div>
<div class="t f" style="top:155px;font-size:9.8px;line-height:11px;color:#111;left:18.3px;">Денежная масса</div>
<div class="t f" style="top:155px;font-size:9.8px;line-height:11px;color:#111;left:86.0px;width:130px;text-align:center;">М</div>
<div class="t f" style="top:155px;font-size:9.8px;line-height:11px;color:#111;left:147.0px;width:130px;text-align:center;">1865,1</div>
<div class="t f" style="top:155px;font-size:9.8px;line-height:11px;color:#111;left:203.0px;width:130px;text-align:center;">2694,1</div>
<div class="t" style="top:162px;font-size:8.2px;line-height:9px;color:#111;letter-spacing:-0.227px;left:284.7px;width:80px;text-align:center;">829</div>
<div class="t f" style="top:173px;font-size:9.8px;line-height:11px;color:#111;left:18.3px;">Наличные деньги</div>
<div class="t f" style="top:173px;font-size:9.8px;line-height:11px;color:#111;left:86.0px;width:130px;text-align:center;">МО</div>
<div class="t f" style="top:173px;font-size:9.8px;line-height:11px;color:#111;left:147.0px;width:130px;text-align:center;">671,4</div>
<div class="t f" style="top:173px;font-size:9.8px;line-height:11px;color:#111;left:203.0px;width:130px;text-align:center;">956,4</div>
<div class="t" style="top:175px;font-size:8.2px;line-height:9px;color:#111;letter-spacing:-0.227px;left:284.7px;width:80px;text-align:center;">285</div>
<div class="t f" style="top:187px;font-size:9.8px;line-height:11px;color:#111;left:18.3px;">Доля наличных денег в</div>
<div class="t f" style="top:199px;font-size:9.8px;line-height:11px;color:#111;left:18.3px;">денежной массе</div>
<div class="t" style="top:199px;font-size:9.4px;line-height:11px;color:#111;left:131.0px;width:40px;text-align:center;">d</div>
<div class="t" style="top:199px;font-size:9.6px;line-height:11px;color:#111;letter-spacing:0.081px;left:154.8px;width:80px;text-align:right;">0,3599807</div>
<div class="t" style="top:199px;font-size:9.6px;line-height:11px;color:#111;letter-spacing:0.183px;left:209.4px;width:80px;text-align:right;">0,354998</div>
<div class="t" style="top:201px;font-size:8px;line-height:9px;color:#111;letter-spacing:-0.239px;left:285.2px;width:80px;text-align:center;">-0,00498274</div>
<div class="t f" style="top:212px;font-size:9.8px;line-height:11px;color:#111;left:18.3px;">Число оборотов</div>
<div class="t f" style="top:225px;font-size:9.8px;line-height:11px;color:#111;left:18.3px;">денежной массы</div>
<div class="t" style="top:226px;font-size:9px;line-height:10px;color:#111;left:131.0px;width:40px;text-align:center;">n</div>
<div class="t" style="top:227px;font-size:8.2px;line-height:9px;color:#111;letter-spacing:-0.262px;left:154.4px;width:80px;text-align:right;">5,799957107</div>
<div class="t" style="top:227px;font-size:8.2px;line-height:9px;color:#111;letter-spacing:-0.325px;left:210.6px;width:80px;text-align:right;">4,900003712</div>
<div class="t" style="top:227px;font-size:8.2px;line-height:9px;color:#111;letter-spacing:-0.217px;left:285.2px;width:80px;text-align:center;">-0,899953395</div>
<div class="t f" style="top:238px;font-size:9.8px;line-height:11px;color:#111;left:18.3px;">Числи оборотов</div>
<div class="t f" style="top:250px;font-size:9.8px;line-height:11px;color:#111;left:18.3px;">наличных денег</div>
<div class="t" style="top:252px;font-size:9px;line-height:10px;color:#111;left:131.0px;width:40px;text-align:center;">n'</div>
<div class="t" style="top:253px;font-size:8.2px;line-height:9px;color:#111;letter-spacing:-0.224px;left:154px;width:80px;text-align:right;">16,11185582</div>
<div class="t" style="top:253px;font-size:8.2px;line-height:9px;color:#111;letter-spacing:-0.471px;left:210.2px;width:80px;text-align:right;">13,80290673</div>
<div class="t" style="top:253px;font-size:8.2px;line-height:9px;color:#111;letter-spacing:-0.395px;left:284.8px;width:80px;text-align:center;">-2,30894909</div>
<div class="t" style="top:264px;font-size:8.1px;line-height:9px;color:#111;letter-spacing:-0.139px;left:-22.7px;width:300px;text-align:center;">Абсолютное изменение скорости обращения денежной</div>
<div class="t" style="top:275px;font-size:8.1px;line-height:9px;color:#111;letter-spacing:-0.063px;left:-23.0px;width:300px;text-align:center;">массы за счет изменения:</div>
<div class="t" style="top:286px;font-size:8.1px;line-height:9px;color:#111;letter-spacing:-0.137px;left:-22.8px;width:300px;text-align:center;">а) скорости обращения наличных денег -</div>
<div class="t" style="top:296px;font-size:8.1px;line-height:9px;color:#111;letter-spacing:-0.111px;left:-22.8px;width:300px;text-align:center;">б) доли наличных денег в денежной массе -</div>
<div class="t" style="top:286px;font-size:8.1px;line-height:9px;color:#111;left:240px;">Δn'*d=</div>
<div class="t" style="top:296px;font-size:8.1px;line-height:9px;color:#111;left:240px;">Δd'*n=</div>
<div class="t" style="top:286px;font-size:8.1px;line-height:9px;color:#111;left:285.7px;width:80px;text-align:center;">-0,819672213</div>
<div style="left:298.5px;top:295px;width:54px;height:9.6px;overflow:hidden;"><div class="t" style="right:12.5px;top:0.6px;font-size:8.1px;line-height:10.4px;color:#111;">=СУММПРОИЗВ(E6*C8)</div></div>
<div style="left:613px;top:73px;width:9.5px;height:355px;background:#f4f3ea;"></div>
<div style="left:622.5px;top:60px;width:1.5px;height:390px;background:#f6f5ee;"></div>
<div style="left:613px;top:73px;width:9.5px;height:3px;background:#ece9d8;border-top:1px solid #777;border-bottom:1px solid #888;box-sizing:border-box;"></div>
<div style="left:613px;top:76px;width:9.5px;height:10px;background:#efede0;box-shadow:inset -1px -1px 0 #b4b1a0, inset 1px 1px 0 #fff;"></div>
<svg style="left:615.3px;top:79.5px" width="5" height="3" viewBox="0 0 5 3"><path d="M.4 2.8 H4.6 L2.5 .2 Z" fill="#000"/></svg>
<div style="left:613px;top:86px;width:9.5px;height:316px;background:#efede0;box-shadow:inset -1px -1px 0 #b4b1a0, inset 1px 1px 0 #fff;"></div>
<div style="left:613px;top:417.5px;width:9.5px;height:10px;background:#efede0;box-shadow:inset -1px -1px 0 #b4b1a0, inset 1px 1px 0 #fff;"></div>
<svg style="left:615.3px;top:421.3px" width="5" height="3" viewBox="0 0 5 3"><path d="M.4 .3 H4.6 L2.5 2.8 Z" fill="#000"/></svg>
<div style="left:0px;top:427.3px;width:613px;height:10.2px;background:#f4f3ea;border-top:1px solid #c4c1b0;box-sizing:border-box;"></div>
<div style="left:0px;top:427.3px;width:41px;height:10.2px;background:#ece9d8;border-top:1px solid #b4b1a0;box-sizing:border-box;"></div>
<svg style="left:1px;top:428.5px" width="40" height="8" viewBox="0 0 40 8"><g fill="#222"><rect x="1.4" y="1.6" width="1" height="4.8"/><path d="M5.6 1.6 V6.4 L2.8 4 Z"/><path d="M15.6 1.6 V6.4 L12.8 4 Z"/><path d="M22.6 1.6 V6.4 L25.4 4 Z"/><path d="M31.4 1.6 V6.4 L34.2 4 Z"/><rect x="34.6" y="1.6" width="1" height="4.8"/></g></svg>
<svg style="left:39px;top:427.3px" width="40" height="10.4" viewBox="0 0 40 10.4"><path d="M0 .5 H40 V9.6 H6 Z" fill="#fff" stroke="#555" stroke-width=".9"/></svg>
<div class="t" style="top:428px;font-size:7.6px;line-height:9px;color:#000;left:42.0px;width:30px;text-align:center;">Лист1</div>
<div style="left:430px;top:428.3px;width:150px;height:9px;background:#efede0;box-shadow:inset -1px -1px 0 #b4b1a0, inset 1px 1px 0 #fff;"></div>
<div style="left:602px;top:428.3px;width:8px;height:9px;background:#efede0;box-shadow:inset -1px -1px 0 #b4b1a0, inset 1px 1px 0 #fff;"></div>
<svg style="left:604.6px;top:430.4px" width="3" height="5" viewBox="0 0 3 5"><path d="M.2 .4 V4.6 L2.8 2.5 Z" fill="#000"/></svg>
<div style="left:610px;top:428.3px;width:2.6px;height:9px;background:#ece9d8;border-left:1px solid #666;border-right:1px solid #999;box-sizing:border-box;"></div>
<div style="left:613px;top:427.5px;width:9.5px;height:10px;background:#ece9d8;border-left:1px solid #888;border-top:1px solid #888;box-sizing:border-box;"></div>
<div style="left:0px;top:437.5px;width:624px;height:11.5px;background:#ece9d8;border-top:1px solid #fbfaf4;box-sizing:border-box;"></div>
<div class="t" style="top:440px;font-size:6.9px;line-height:7px;color:#000;left:3px;">Укажите</div>
<div class="t" style="top:441px;font-size:6.4px;line-height:7px;color:#000;left:543.7px;width:30px;text-align:center;">NUM</div>
<div style="left:478px;top:439.5px;width:1px;height:8px;background:#e6e3d3;"></div>
<div style="left:502px;top:439.5px;width:1px;height:8px;background:#e6e3d3;"></div>
<div style="left:528px;top:439.5px;width:1px;height:8px;background:#e6e3d3;"></div>
<div style="left:548px;top:439.5px;width:1px;height:8px;background:#e6e3d3;"></div>
<div style="left:572px;top:439.5px;width:1px;height:8px;background:#e6e3d3;"></div>
<div style="left:592px;top:439.5px;width:1px;height:8px;background:#e6e3d3;"></div>
<div style="left:71px;top:306.5px;width:360.2px;height:142.5px;background:#0f2fbe;border-radius:4px 4px 0 0;overflow:hidden;"><div style="left:0;top:0;width:100%;height:18px;background:linear-gradient(#2a6cea 0%,#3b82f6 8%,#1f66e8 22%,#165ae0 55%,#1a60e8 85%,#1248c8 100%);"></div><div style="left:2.3px;top:18px;width:355.4px;height:130px;background:#ece9d8;"></div></div>
<div class="t" style="top:312px;font-size:8.8px;line-height:10px;color:#fff;font-weight:bold;letter-spacing:-0.64px;left:75.6px;text-shadow:.5px .5px 0 #0a2a90;">Аргументы функции</div>
<div style="left:401.3px;top:310.4px;width:12.3px;height:12.5px;background:linear-gradient(135deg,#6f9cf6,#2a5fd8 60%,#1f4fc4);border-radius:2px;border:1px solid #e8eefc;box-sizing:border-box;"></div>
<div class="t" style="top:311px;font-size:10px;line-height:11px;color:#fff;font-weight:bold;left:401.4px;width:12px;text-align:center;">?</div>
<div style="left:415.3px;top:310.4px;width:12.4px;height:12.5px;background:linear-gradient(135deg,#f0a088,#d8502c 50%,#c03818);border-radius:2px;border:1px solid #f6e8e4;box-sizing:border-box;"></div>
<svg style="left:415.5px;top:310.4px" width="12" height="12.5" viewBox="0 0 12 12.5"><path d="M3.3 3.5 L8.7 9 M8.7 3.5 L3.3 9" stroke="#fff" stroke-width="1.5"/></svg>
<div style="left:76.3px;top:330.4px;width:348.3px;height:51.8px;border:1px solid #d6d3c2;border-radius:2px;box-sizing:border-box;box-shadow:inset 1px 1px 0 #f6f5ee;"></div>
<div style="left:77.6px;top:327px;width:44.4px;height:8px;background:#ece9d8;"></div>
<div class="t" style="top:328px;font-size:6.5px;line-height:7px;color:#000;letter-spacing:-0.369px;left:78.4px;">СУММПРОИЗВ</div>
<div class="t" style="top:340px;font-size:6.75px;line-height:7px;color:#000;font-weight:bold;letter-spacing:0.026px;left:146.8px;width:60px;text-align:right;">Массив1</div>
<div class="t" style="top:354px;font-size:6.75px;line-height:7px;color:#000;letter-spacing:-0.33px;left:146.8px;width:60px;text-align:right;">Массив2</div>
<div class="t" style="top:367px;font-size:6.75px;line-height:7px;color:#000;letter-spacing:-0.33px;left:146.8px;width:60px;text-align:right;">Массив3</div>
<div style="left:209.6px;top:337.6px;width:132.8px;height:11.3px;background:#fff;border:1px solid #5a5a5a;border-right-color:#e4e1d2;border-bottom-color:#e4e1d2;box-shadow:inset 1px 1px 0 #8c8a80;box-sizing:border-box;"></div>
<svg style="left:331.8px;top:338.90000000000003px" width="10" height="9.4" viewBox="0 0 10 9.4"><rect x="0" y="0" width="10" height="9.4" fill="#ece9d8"/><rect x=".4" y=".4" width="9.2" height="8.6" fill="#f6f5ee" stroke="#a8a594" stroke-width=".7"/><rect x="1.2" y="1.2" width="3.4" height="2.2" fill="#2a3cb0"/><path d="M3.6 2.6 L7.6 7" stroke="#d21a1a" stroke-width="1.6"/><path d="M5 7.8 H8.6 V4.2 Z" fill="#c01414"/><path d="M6.6 8.4 H9 V6" fill="none" stroke="#222" stroke-width=".8"/></svg>
<div class="t" style="top:339px;font-size:7.35px;line-height:9px;color:#000;font-weight:bold;left:344.8px;">=</div>
<div style="left:209.6px;top:351.1px;width:132.8px;height:11.3px;background:#fff;border:1px solid #5a5a5a;border-right-color:#e4e1d2;border-bottom-color:#e4e1d2;box-shadow:inset 1px 1px 0 #8c8a80;box-sizing:border-box;"></div>
<svg style="left:331.8px;top:352.40000000000003px" width="10" height="9.4" viewBox="0 0 10 9.4"><rect x="0" y="0" width="10" height="9.4" fill="#ece9d8"/><rect x=".4" y=".4" width="9.2" height="8.6" fill="#f6f5ee" stroke="#a8a594" stroke-width=".7"/><rect x="1.2" y="1.2" width="3.4" height="2.2" fill="#2a3cb0"/><path d="M3.6 2.6 L7.6 7" stroke="#d21a1a" stroke-width="1.6"/><path d="M5 7.8 H8.6 V4.2 Z" fill="#c01414"/><path d="M6.6 8.4 H9 V6" fill="none" stroke="#222" stroke-width=".8"/></svg>
<div class="t" style="top:352px;font-size:7.35px;line-height:9px;color:#000;font-weight:bold;left:344.8px;">=</div>
<div style="left:209.6px;top:364.6px;width:132.8px;height:11.3px;background:#fff;border:1px solid #5a5a5a;border-right-color:#e4e1d2;border-bottom-color:#e4e1d2;box-shadow:inset 1px 1px 0 #8c8a80;box-sizing:border-box;"></div>
<svg style="left:331.8px;top:365.90000000000003px" width="10" height="9.4" viewBox="0 0 10 9.4"><rect x="0" y="0" width="10" height="9.4" fill="#ece9d8"/><rect x=".4" y=".4" width="9.2" height="8.6" fill="#f6f5ee" stroke="#a8a594" stroke-width=".7"/><rect x="1.2" y="1.2" width="3.4" height="2.2" fill="#2a3cb0"/><path d="M3.6 2.6 L7.6 7" stroke="#d21a1a" stroke-width="1.6"/><path d="M5 7.8 H8.6 V4.2 Z" fill="#c01414"/><path d="M6.6 8.4 H9 V6" fill="none" stroke="#222" stroke-width=".8"/></svg>
<div class="t" style="top:366px;font-size:7.35px;line-height:9px;color:#000;font-weight:bold;left:344.8px;">=</div>
<div class="t" style="top:340px;font-size:6.5px;line-height:7px;color:#111;letter-spacing:0.122px;left:211px;">E6*C8</div>
<div style="left:231.2px;top:339.6px;width:0.8px;height:7.6px;background:#000;"></div>
<div class="t" style="top:340px;font-size:6.75px;line-height:7px;color:#000;letter-spacing:-0.022px;left:352.6px;">-0,080281182</div>
<div class="t" style="top:354px;font-size:6.75px;line-height:7px;color:#f9f8f2;letter-spacing:0.083px;left:352.6px;">массив</div>
<div class="t" style="top:367px;font-size:6.75px;line-height:7px;color:#f9f8f2;letter-spacing:0.083px;left:352.6px;">массив</div>
<div class="t" style="top:387px;font-size:6.75px;line-height:7px;color:#000;font-weight:bold;left:345px;">=</div>
<div class="t" style="top:387px;font-size:6.75px;line-height:7px;color:#000;letter-spacing:-0.047px;left:352.7px;">-0,080281182</div>
<div class="t" style="top:397px;font-size:6.75px;line-height:7px;color:#000;letter-spacing:-0.039px;left:76.7px;">Возвращает сумму произведений соответствующих элементов массивов или диапазонов.</div>
<div class="t" style="top:431px;font-size:6.75px;line-height:7px;color:#000;font-weight:bold;letter-spacing:-0.071px;left:146.8px;width:60px;text-align:right;">Массив1:</div>
<div class="t" style="top:431px;font-size:6.75px;line-height:7px;color:#000;letter-spacing:-0.019px;left:210.7px;">массив1;массив2;... от 2 до 30 массивов, чьи компоненты нужно</div>
<div class="t" style="top:440px;font-size:6.75px;line-height:7px;color:#000;letter-spacing:-0.011px;left:210.7px;">перемножить, а затем сложить полученные произведения. Все</div>
<div style="left:0px;top:449.3px;width:624px;height:18.7px;background:linear-gradient(#dfe8f8 0%,#4a86ec 5%,#2c68e2 14%,#245edb 30%,#2158d4 80%,#1c4bc0 100%);"></div>
<div style="left:0px;top:449.3px;width:57px;height:18.7px;background:linear-gradient(#62b662 0%,#46a446 15%,#3c983e 60%,#2f8234 100%);border-radius:0 8px 8px 0;box-shadow:inset -2px -1px 3px #245f28, inset 0 1px 1px #8fd08a;"></div>
<svg style="left:7px;top:453px" width="10" height="10" viewBox="0 0 10 10"><rect x=".5" y=".8" width="4" height="3.8" fill="#e8542c"/><rect x="5.2" y=".8" width="4" height="3.8" fill="#74c044"/><rect x=".5" y="5.2" width="4" height="3.8" fill="#4a8ce8"/><rect x="5.2" y="5.2" width="4" height="3.8" fill="#f4d03c"/></svg>
<div class="t" style="top:452px;font-size:10.5px;line-height:12px;color:#fff;font-weight:bold;font-style:italic;letter-spacing:-0.203px;left:21px;text-shadow:.6px .8px 1px #1d4a20;">пуск</div>
<div style="left:64.3px;top:451.5px;width:96.50000000000001px;height:14.5px;background:linear-gradient(#5a94f4 0%,#3d7cee 12%,#3874e8 60%,#3068dc 100%);box-shadow:inset 0 1px 0 #7cb0fa, inset -1px -1px 0 #2454c0;border-radius:2px;"></div>
<div style="left:161.5px;top:451.5px;width:96.5px;height:14.5px;background:linear-gradient(#5a94f4 0%,#3d7cee 12%,#3874e8 60%,#3068dc 100%);box-shadow:inset 0 1px 0 #7cb0fa, inset -1px -1px 0 #2454c0;border-radius:2px;"></div>
<div style="left:258.7px;top:451.5px;width:97.19999999999999px;height:14.5px;background:linear-gradient(#1b47b8,#1f50c8 40%,#2156cc);box-shadow:inset 1px 1px 1px #123488;border-radius:2px;"></div>
<svg style="left:70.5px;top:453.5px" width="10" height="10" viewBox="0 0 10 10"><path d="M.6 2.4 H4 L5 3.6 H9.4 V9 H.6 Z" fill="#f0d070" stroke="#a08428" stroke-width=".6"/><rect x="3" y="1" width="4.6" height="5" fill="#fff" stroke="#8898c8" stroke-width=".5"/></svg>
<div class="t" style="top:455px;font-size:6.7px;line-height:7px;color:#fff;letter-spacing:-0.024px;left:82.5px;">Мои документы</div>
<svg style="left:167px;top:453.5px" width="10" height="10" viewBox="0 0 10 10"><rect x="1" y=".6" width="8" height="8.8" fill="#fff" stroke="#3050a8" stroke-width=".8"/><text x="5" y="7.6" font-size="6.6" font-weight="bold" text-anchor="middle" fill="#2848a8" font-family="Liberation Sans, sans-serif">W</text></svg>
<div class="t" style="top:455px;font-size:6.7px;line-height:7px;color:#fff;letter-spacing:0.132px;left:179px;">Курсовая по статис...</div>
<svg style="left:265.5px;top:453.5px" width="10" height="10" viewBox="0 0 10 10"><rect x=".6" y=".6" width="8.8" height="8.8" fill="#2e8b3a" stroke="#d8ecd8" stroke-width=".8"/><path d="M2.8 2.8 L7.2 7.4 M7.2 2.8 L2.8 7.4" stroke="#fff" stroke-width="1.3"/></svg>
<div class="t" style="top:455px;font-size:6.7px;line-height:7px;color:#fff;letter-spacing:-0.065px;left:278px;">Книга1</div>
<div style="left:589.5px;top:449px;width:34.5px;height:19px;background:linear-gradient(#2aa4f4 0%,#1593ec 15%,#1290e8 60%,#0f7fd4 100%);box-shadow:inset 1px 0 0 #0d5fb8, inset 2px 0 0 #4ab8f8;"></div>
<div class="t" style="top:455px;font-size:6.7px;line-height:7px;color:#fff;left:562.0px;width:20px;text-align:center;">EN</div>
<div style="left:583.5px;top:453px;width:10.5px;height:10.5px;background:radial-gradient(circle at 40% 35%,#8ccaf8,#2a8ae8 70%);border-radius:50%;border:1px solid #bfe0fa;box-sizing:border-box;"></div>
<svg style="left:586px;top:455.4px" width="5" height="6" viewBox="0 0 5 6"><path d="M3.6 .6 L1.2 3 L3.6 5.4" stroke="#fff" stroke-width="1.3" fill="none"/></svg>
<div class="t" style="top:455px;font-size:6.9px;line-height:7px;color:#fff;left:592.3px;width:30px;text-align:center;">13:56</div>
</body></html>
